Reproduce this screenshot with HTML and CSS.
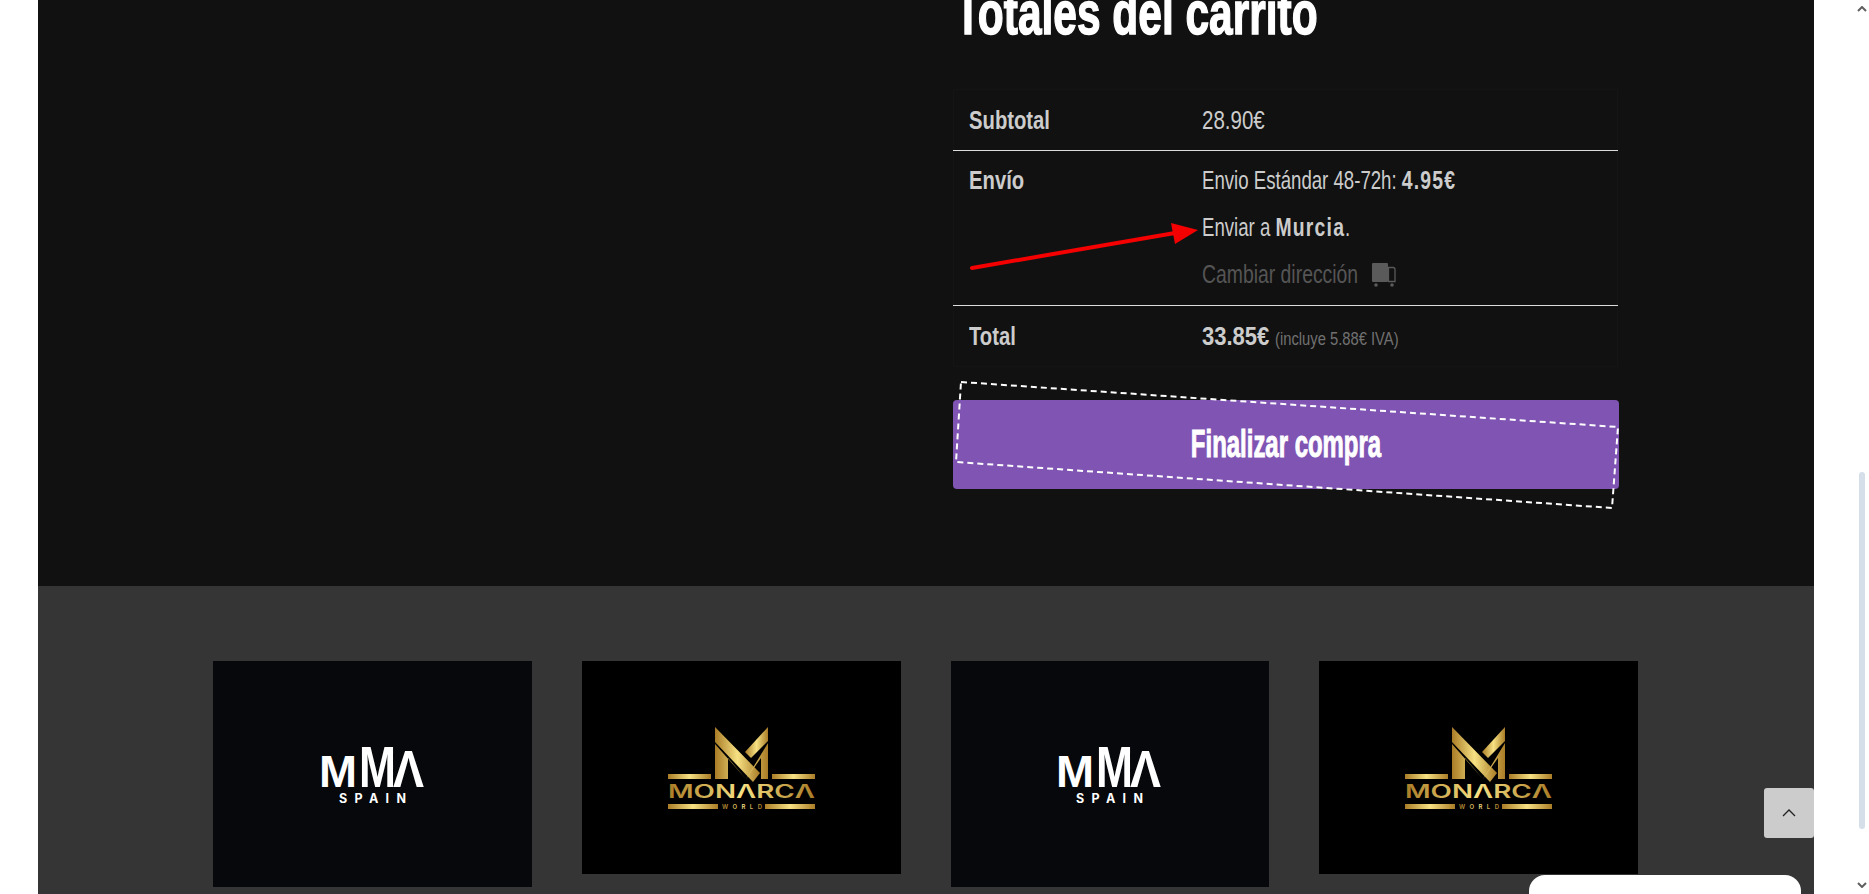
FILE: index.html
```html
<!DOCTYPE html>
<html lang="es">

<head>
    <meta charset="UTF-8">
    <title>Carrito</title>
    <link rel="stylesheet" href="styles.css">
</head>

<body>
    <div class="page">
        <div class="cart-section">
            <div class="cart-totals">
                <h2 class="totals-title"><span>Totales del carrito</span></h2>
                <table class="totals-table">
                    <tr>
                        <th><span class="cond cond-label">Subtotal</span></th>
                        <td><span class="cond cond-price">28.90€</span></td>
                    </tr>
                    <tr>
                        <th>
                            <p class="ship-line"><span class="cond cond-label">Envío</span></p>
                        </th>
                        <td>
                            <p class="ship-line"><span class="cond cond-text">Envio Estándar 48-72h: <strong>4.95€</strong></span></p>
                            <p class="ship-line"><span class="cond cond-text">Enviar a <strong>Murcia</strong>.</span></p>
                            <p class="ship-line change-address"><span class="cond cond-change">Cambiar dirección</span>
                                <svg class="truck-icon" width="24" height="24" viewBox="0 0 24 24">
                                    <rect x="0" y="0" width="16" height="19" rx="1" fill="#5a5a5a"></rect>
                                    <path d="M16.5 4.5h4.5a2 2 0 0 1 2 2v12h-6.500z" fill="none" stroke="#5a5a5a" stroke-width="1.300"></path>
                                    <circle cx="4" cy="22" r="1.800" fill="#5a5a5a"></circle>
                                    <circle cx="20" cy="22" r="1.800" fill="#5a5a5a"></circle>
                                </svg>
                            </p>
                        </td>
                    </tr>
                    <tr>
                        <th><span class="cond cond-label">Total</span></th>
                        <td>
                            <div class="total-line">
                                <strong class="cond cond-total">33.85€</strong>
                                <small class="cond tax-note">(incluye 5.88€ IVA)</small>
                            </div>
                        </td>
                    </tr>
                </table>

                <a class="checkout-button" href="#"><span>Finalizar compra</span></a>

                <!-- annotations drawn on top of the screenshot -->
                <svg class="red-arrow" width="240" height="60" viewBox="0 0 240 60">
                    <line x1="2" y1="46" x2="205" y2="11" stroke="#f40000" stroke-width="4" stroke-linecap="round"></line>
                    <polygon points="228,8 201,1 205,22" fill="#f40000"></polygon>
                </svg>
                <svg class="dashed-box" width="668" height="130" viewBox="0 0 668 130">
                    <polygon points="6,1 663,46 657,127 1,81" fill="none" stroke="#fff" stroke-width="2" stroke-dasharray="6 4"></polygon>
                </svg>
            </div>
        </div>

        <div class="logos-section">
            <div class="logos-grid">
                <div class="logo-card logo-card-mma">
                    <svg width="145" height="100" viewBox="300 725 145 100">
                        <text class="mma-letter" x="319" y="788" font-size="44" textLength="38" lengthAdjust="spacingAndGlyphs">M</text>
                        <text class="mma-letter" x="359" y="788" font-size="58" textLength="37" lengthAdjust="spacingAndGlyphs">M</text>
                        <text class="mma-letter" x="393" y="788" font-size="52" textLength="31" lengthAdjust="spacingAndGlyphs">Λ</text>
                        <text class="mma-sub" x="339" y="804" textLength="67">SPAIN</text>
                    </svg>
                </div>
                <div class="logo-card logo-card-monarca">
                    <svg width="147" height="82" viewBox="18 16 147 82">
                        <defs>
                            <linearGradient id="gold" x1="0" y1="0" x2="1" y2="0">
                                <stop offset="0" stop-color="#a97c26"></stop>
                                <stop offset="0.5" stop-color="#f7e183"></stop>
                                <stop offset="1" stop-color="#a97c26"></stop>
                            </linearGradient>
                        </defs>
                        <g fill="url(#gold)">
                            <polygon points="65,16 110,62 103,71 65,31"></polygon>
                            <polygon points="118,16 118,30 101,47 95,41"></polygon>
                            <polygon points="65,33 96,68 118,32 118,68 111,68 111,47 96,68 78,47 78,68 65,68"></polygon>
                            <rect x="18" y="63" width="43" height="5"></rect>
                            <rect x="122" y="63" width="43" height="5"></rect>
                            <rect x="18" y="93" width="50" height="5"></rect>
                            <rect x="115" y="93" width="50" height="5"></rect>
                            <text class="monarca-name" x="18" y="87" textLength="147" lengthAdjust="spacingAndGlyphs">MONΛRCΛ</text>
                            <text class="monarca-sub" x="72" y="98" textLength="40">WORLD</text>
                        </g>
                    </svg>
                </div>
                <div class="logo-card logo-card-mma">
                    <svg width="145" height="100" viewBox="300 725 145 100">
                        <text class="mma-letter" x="319" y="788" font-size="44" textLength="38" lengthAdjust="spacingAndGlyphs">M</text>
                        <text class="mma-letter" x="359" y="788" font-size="58" textLength="37" lengthAdjust="spacingAndGlyphs">M</text>
                        <text class="mma-letter" x="393" y="788" font-size="52" textLength="31" lengthAdjust="spacingAndGlyphs">Λ</text>
                        <text class="mma-sub" x="339" y="804" textLength="67">SPAIN</text>
                    </svg>
                </div>
                <div class="logo-card logo-card-monarca">
                    <svg width="147" height="82" viewBox="18 16 147 82">
                        <g fill="url(#gold)">
                            <polygon points="65,16 110,62 103,71 65,31"></polygon>
                            <polygon points="118,16 118,30 101,47 95,41"></polygon>
                            <polygon points="65,33 96,68 118,32 118,68 111,68 111,47 96,68 78,47 78,68 65,68"></polygon>
                            <rect x="18" y="63" width="43" height="5"></rect>
                            <rect x="122" y="63" width="43" height="5"></rect>
                            <rect x="18" y="93" width="50" height="5"></rect>
                            <rect x="115" y="93" width="50" height="5"></rect>
                            <text class="monarca-name" x="18" y="87" textLength="147" lengthAdjust="spacingAndGlyphs">MONΛRCΛ</text>
                            <text class="monarca-sub" x="72" y="98" textLength="40">WORLD</text>
                        </g>
                    </svg>
                </div>
            </div>
        </div>
    </div>

    <a class="scroll-top" href="#">
        <svg width="14" height="8" viewBox="0 0 14 8">
            <path d="M1 7l6-6 6 6" fill="none" stroke="#222" stroke-width="1.300"></path>
        </svg>
    </a>
    <div class="chat-widget"></div>

    <div class="scrollbar">
        <svg class="scroll-arrow" width="10" height="6" viewBox="0 0 10 6">
            <path d="M1 5l4-4 4 4" fill="none" stroke="#606060" stroke-width="2"></path>
        </svg>
        <div class="scroll-track">
            <div class="scroll-thumb"></div>
        </div>
        <svg class="scroll-arrow" width="10" height="6" viewBox="0 0 10 6">
            <path d="M1 1l4 4 4-4" fill="none" stroke="#606060" stroke-width="2"></path>
        </svg>
    </div>
</body>

</html>
```

FILE: styles.css
```css
body {
    font-family: 'Liberation Sans', sans-serif;
    margin: 0;
    padding: 0;
    height: 894px;
    overflow: hidden;
    position: relative;
    background-color: #fff;
    color: #ccc;
}

.page {
    margin: 0 55px 0 38px;
}

.cart-section {
    background-color: #111;
    height: 586px;
}

.cart-totals {
    position: relative;
    width: 665px;
    margin-left: 915px;
}

.totals-title {
    margin: 0;
    height: 89px;
    padding-left: 2px;
    font-size: 62px;
    line-height: 26px;
    color: #fff;
    -webkit-text-stroke: 1.5px #fff;
}

.totals-title span {
    display: inline-block;
    transform: scaleX(0.685);
    transform-origin: left;
    white-space: nowrap;
}

/* no condensed font here, so the text is squeezed */
.cond {
    display: inline-block;
    transform-origin: left;
    white-space: nowrap;
}

.cond-label {
    transform: scaleX(0.81);
}

.cond-price {
    transform: scaleX(0.82);
}

.cond-text {
    transform: scaleX(0.745);
}

.cond-text strong {
    font-size: 26px;
    letter-spacing: 1.6px;
}

.cond-change {
    transform: scaleX(0.775);
}

.cond-total {
    transform: scaleX(0.88);
}

.totals-table {
    width: 100%;
    border-collapse: collapse;
    font-size: 25px;
    border: 1px solid #141414;
    table-layout: fixed;
}

.totals-table th,
.totals-table td {
    padding: 0 15px;
    height: 60px;
    text-align: left;
    border-bottom: 1px solid #ddd;
    vertical-align: middle;
}

.totals-table th {
    width: 203px;
}

.totals-table tr:nth-child(2) th,
.totals-table tr:nth-child(2) td {
    vertical-align: top;
    padding-top: 6px;
    padding-bottom: 7px;
}

.totals-table tr:last-child th,
.totals-table tr:last-child td {
    border-bottom: none;
}

.ship-line {
    margin: 0;
    height: 47px;
    line-height: 47px;
}

.change-address {
    color: #555;
    display: flex;
    align-items: center;
}

.truck-icon {
    margin-left: -31px;
}

.total-line {
    display: flex;
    align-items: baseline;
}

.tax-note {
    font-size: 18px;
    color: #707070;
    margin-left: -3px;
    transform: scaleX(0.82);
}

.checkout-button {
    display: flex;
    justify-content: center;
    align-items: center;
    height: 89px;
    margin-top: 33px;
    margin-right: -1px;
    background-color: #7f54b3;
    border-radius: 4px;
    color: #fff;
    font-size: 38px;
    font-weight: bold;
    text-decoration: none;
    -webkit-text-stroke: 1px #fff;
}

.checkout-button span {
    display: inline-block;
    transform: scaleX(0.63);
    white-space: nowrap;
}

.red-arrow {
    position: absolute;
    left: 17px;
    top: 222px;
    pointer-events: none;
}

.dashed-box {
    position: absolute;
    left: 2px;
    top: 381px;
    pointer-events: none;
}

.logos-section {
    background-color: #353535;
    height: 308px;
    padding: 75px 176px 0 175px;
    box-sizing: border-box;
}

.logos-grid {
    display: grid;
    grid-template-columns: repeat(4, 1fr);
    column-gap: 50px;
    align-items: start;
}

.logo-card {
    display: flex;
    justify-content: center;
    align-items: center;
}

.logo-card-mma {
    height: 226px;
    background-color: #06080b;
}

.logo-card-monarca {
    height: 213px;
    background-color: #000;
}

.mma-letter {
    font-family: 'Liberation Sans', sans-serif;
    font-weight: bold;
    fill: #fff;
}

.mma-sub {
    font-family: 'Inter', sans-serif;
    font-size: 12.5px;
    font-weight: 700;
    fill: #fff;
}

.monarca-name {
    font-family: 'Inter', sans-serif;
    font-size: 18px;
    font-weight: 600;
}

.monarca-sub {
    font-family: 'Inter', sans-serif;
    font-size: 6px;
    font-weight: 600;
}

.scroll-top {
    position: absolute;
    left: 1764px;
    top: 788px;
    width: 50px;
    height: 50px;
    background-color: #ccc;
    border-radius: 3px;
    display: flex;
    justify-content: center;
    align-items: center;
}

.chat-widget {
    position: absolute;
    left: 1529px;
    top: 875px;
    width: 272px;
    height: 40px;
    background-color: #fff;
    border-radius: 16px;
}

.scrollbar {
    position: absolute;
    right: 0;
    top: 0;
    width: 15px;
    height: 894px;
    display: flex;
    flex-direction: column;
    align-items: center;
    justify-content: space-between;
    padding: 6px 0;
    box-sizing: border-box;
}

.scroll-track {
    flex: 1;
    width: 6px;
    position: relative;
}

.scroll-thumb {
    position: absolute;
    left: 0;
    top: 460px;
    width: 6px;
    height: 357px;
    background-color: #d5dfe9;
    border-radius: 3px;
}
```
